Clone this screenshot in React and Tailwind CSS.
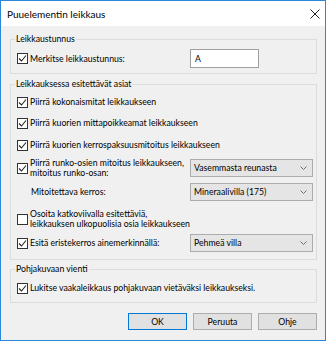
import React from 'react';

const Check = ({ checked }) => (
  <span className="w-[11px] h-[11px] border border-[#333333] bg-white flex items-center justify-center shrink-0">
    {checked && (
      <svg width="9" height="9" viewBox="0 0 9 9">
        <path d="M1 4.5 L3.5 7 L8 1.5" fill="none" stroke="#222222" strokeWidth="1.1" />
      </svg>
    )}
  </span>
);

const Select = ({ value }) => (
  <div className="w-[123px] h-[18px] border border-[#acacac] bg-[#e5e5e5] flex items-center justify-between pl-[3px] pr-[5px] shrink-0">
    <span className="whitespace-nowrap">{value}</span>
    <svg width="7" height="4" viewBox="0 0 7 4">
      <path d="M0.5 0.5 L3.5 3.5 L6.5 0.5" fill="none" stroke="#707070" strokeWidth="1" />
    </svg>
  </div>
);

const Group = ({ title, className, children }) => (
  <fieldset className={`ml-[9px] w-[307px] border border-[#dcdcdc] ${className}`}>
    <legend className="ml-[4px] px-[1px] leading-[10px]">{title}</legend>
    {children}
  </fieldset>
);

const CheckRow = ({ checked, children, className }) => (
  <div className={`flex items-center pl-[6px] gap-[2px] whitespace-nowrap ${className}`}>
    <Check checked={checked} />
    <span>{children}</span>
  </div>
);

const Button = ({ children, primary }) => (
  <button
    className={`w-[59px] h-[17px] flex items-center justify-center bg-[#e1e1e1] border ${
      primary ? 'border-[#0078d7]' : 'border-[#adadad]'
    }`}
  >
    {children}
  </button>
);

export default function App() {
  return (
    <div
      className="w-[326px] h-[341px] border border-[#2b88d8] bg-[#f0f0f0] flex flex-col text-[8.7px] text-black leading-[12px]"
      style={{ fontFamily: 'Lato, sans-serif' }}
    >
      {/* Title bar */}
      <div className="h-[25px] bg-white flex items-center justify-between pl-[6px] pr-[5px] shrink-0">
        <span className="text-[10px]">Puuelementin leikkaus</span>
        <svg width="10" height="10" viewBox="0 0 10 10">
          <path d="M0.5 0.5 L9.5 9.5 M9.5 0.5 L0.5 9.5" stroke="#222222" strokeWidth="1" />
        </svg>
      </div>

      {/* Leikkaustunnus */}
      <Group title="Leikkaustunnus" className="mt-[8px] pt-[5px] pb-[5px]">
        <div className="flex items-center h-[19px]">
          <CheckRow checked className="w-[179px]">Merkitse leikkaustunnus:</CheckRow>
          <div className="w-[69px] h-[19px] bg-white border border-[#a0a0a0] flex items-center pl-[4px]">A</div>
        </div>
      </Group>

      {/* Leikkauksessa esitettävät asiat */}
      <Group title="Leikkauksessa esitettävät asiat" className="mt-[5px] pb-[4px]">
        <CheckRow checked className="h-[26px]">Piirrä kokonaismitat leikkaukseen</CheckRow>
        <CheckRow checked className="h-[16px]">Piirrä kuorien mittapoikkeamat leikkaukseen</CheckRow>
        <CheckRow checked className="h-[28px]">Piirrä kuorien kerrospaksuusmitoitus leikkaukseen</CheckRow>
        <div className="flex items-center justify-between h-[18px] pr-[3px]">
          <CheckRow checked>
            <span className="block leading-[10px]">
              Piirrä runko-osien mitoitus leikkaukseen,
              <br />
              mitoitus runko-osan:
            </span>
          </CheckRow>
          <Select value="Vasemmasta reunasta" />
        </div>
        <div className="flex items-center justify-between h-[30px] pl-[20px] pr-[3px]">
          <span>Mitoitettava kerros:</span>
          <Select value="Mineraalivilla (175)" />
        </div>
        <CheckRow className="h-[24px]">
          <span className="block leading-[10px]">
            Osoita katkoviivalla esitettäviä,
            <br />
            leikkauksen ulkopuolisia osia leikkaukseen
          </span>
        </CheckRow>
        <div className="flex items-center justify-between h-[24px] pr-[3px]">
          <CheckRow checked>Esitä eristekerros ainemerkinnällä:</CheckRow>
          <Select value="Pehmeä villa" />
        </div>
      </Group>

      {/* Pohjakuvaan vienti */}
      <Group title="Pohjakuvaan vienti" className="mt-[4px] pt-[6px] pb-[6px]">
        <CheckRow checked className="h-[16px]">Lukitse vaakaleikkaus pohjakuvaan vietäväksi leikkaukseksi.</CheckRow>
      </Group>

      {/* Buttons */}
      <div className="flex justify-end gap-[6px] mt-[10px] pr-[8px]">
        <Button primary>OK</Button>
        <Button>Peruuta</Button>
        <Button>Ohje</Button>
      </div>
    </div>
  );
}
